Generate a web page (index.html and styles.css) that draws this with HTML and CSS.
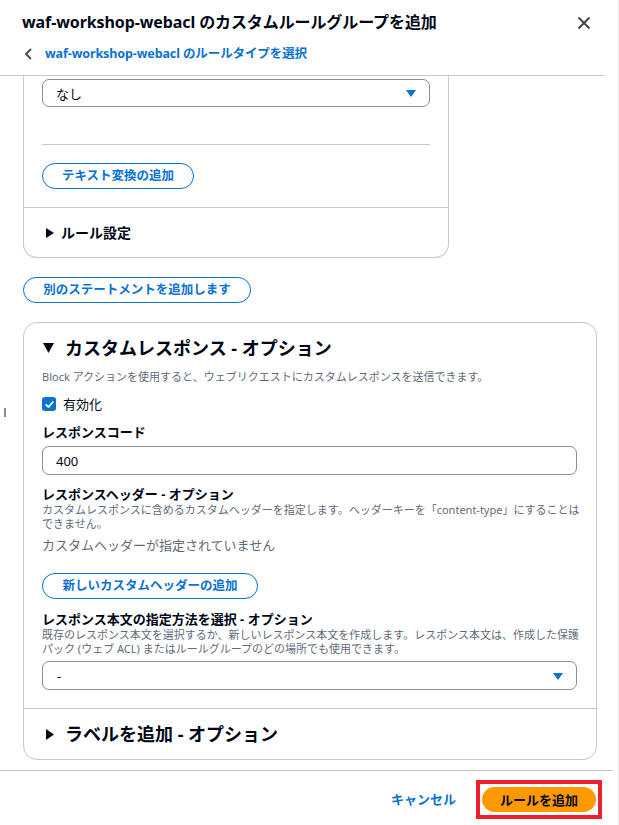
FILE: index.html
```html
<!DOCTYPE html>
<html lang="ja">
<head>
<meta charset="utf-8">
<link rel="stylesheet" href="styles.css">
</head>
<body>
<div class="panel">
  <header class="header">
    <div class="title-row">
      <h1 class="title">waf-workshop-webacl のカスタムルールグループを追加</h1>
      <svg class="close" width="14" height="14" viewBox="0 0 14 14"><path d="M1.5 1.5 L12.5 12.5 M12.5 1.5 L1.5 12.5" stroke="#424650" stroke-width="2" fill="none"/></svg>
    </div>
    <div class="back-row">
      <svg class="chev" width="9" height="12" viewBox="0 0 9 12"><path d="M7 1 L2 6 L7 11" stroke="#424650" stroke-width="1.8" fill="none"/></svg>
      <span class="back-link">waf-workshop-webacl のルールタイプを選択</span>
    </div>
  </header>

  <main class="content">
    <section class="card card-cut">
      <div class="card-body">
        <div class="select small">
          <span>なし</span>
          <svg class="caret" width="10" height="7" viewBox="0 0 10 7"><path d="M0 0 H10 L5 7 Z" fill="#0972d3"/></svg>
        </div>
        <hr class="divider">
        <button class="btn-outline">テキスト変換の追加</button>
      </div>
      <div class="card-section">
        <svg class="tri" width="8" height="10" viewBox="0 0 8 10"><path d="M0 0 L8 5 L0 10 Z" fill="#000716"/></svg>
        <span class="section-title sm">ルール設定</span>
      </div>
    </section>

    <button class="btn-outline standalone">別のステートメントを追加します</button>

    <section class="card card-main">
      <div class="card-body main-body">
        <div class="card-head">
          <svg class="tri-down" width="11" height="10" viewBox="0 0 11 10"><path d="M0 0 H11 L5.5 10 Z" fill="#000716"/></svg>
          <span class="section-title lg">カスタムレスポンス - オプション</span>
        </div>
        <p class="desc one">Block アクションを使用すると、ウェブリクエストにカスタムレスポンスを送信できます。</p>
        <label class="check-row">
          <span class="checkbox"><svg width="13" height="13" viewBox="0 0 13 13"><path d="M3.2 6.8 L5.5 9 L9.8 4.2" stroke="#fff" stroke-width="1.8" fill="none" stroke-linecap="round" stroke-linejoin="round"/></svg></span>
          <span class="check-label">有効化</span>
        </label>
        <div class="field-label f-code">レスポンスコード</div>
        <div class="input">400</div>
        <div class="field-label f-head">レスポンスヘッダー - オプション</div>
        <p class="desc two">カスタムレスポンスに含めるカスタムヘッダーを指定します。ヘッダーキーを「content-type」にすることはできません。</p>
        <div class="empty">カスタムヘッダーが指定されていません</div>
        <button class="btn-outline b-header">新しいカスタムヘッダーの追加</button>
        <div class="field-label f-body">レスポンス本文の指定方法を選択 - オプション</div>
        <p class="desc two">既存のレスポンス本文を選択するか、新しいレスポンス本文を作成します。レスポンス本文は、作成した保護パック (ウェブ ACL) またはルールグループのどの場所でも使用できます。</p>
        <div class="select wide">
          <span>-</span>
          <svg class="caret" width="10" height="7" viewBox="0 0 10 7"><path d="M0 0 H10 L5 7 Z" fill="#0972d3"/></svg>
        </div>
      </div>
      <div class="card-section lg-section">
        <svg class="tri lg-tri" width="8" height="11" viewBox="0 0 8 11"><path d="M0 0 L8 5.5 L0 11 Z" fill="#000716"/></svg>
        <span class="section-title lg">ラベルを追加 - オプション</span>
      </div>
    </section>
  </main>

  <footer class="footer">
    <span class="cancel">キャンセル</span>
    <span class="highlight"><button class="btn-primary">ルールを追加</button></span>
  </footer>
</div>
<span class="resize-grip"></span>
</body>
</html>
```
FILE: styles.css
```css
* { box-sizing: border-box; }
html, body { margin: 0; padding: 0; }
body {
  width: 619px;
  height: 825px;
  overflow: hidden;
  background: #fff;
  color: #000716;
  font-family: "Noto Sans", "Noto Sans CJK JP", sans-serif;
  position: relative;
}
.panel {
  width: 619px;
  height: 825px;
  display: flex;
  flex-direction: column;
  border-right: 1px solid #ececef;
}
.header {
  width: 604px;
  height: 76px;
  border-bottom: 1px solid #c6c6cd;
  padding: 11px 13px 0 22px;
}
.title-row {
  display: flex;
  justify-content: space-between;
  align-items: center;
  height: 22px;
}
.title {
  margin: 0;
  font-size: 16px;
  font-weight: 700;
  line-height: 22px;
  letter-spacing: -0.1px;
}
.close { margin-top: 1px; }
.back-row {
  display: flex;
  align-items: center;
  margin-top: 10px;
  padding-left: 2px;
  height: 22px;
}
.chev { margin-right: 12px; }
.back-link {
  color: #0972d3;
  font-size: 12.5px;
  font-weight: 700;
  line-height: 18px;
  letter-spacing: -0.1px;
}
.content {
  flex: 1;
  padding: 0 0 0 23px;
  overflow: hidden;
  display: flex;
  flex-direction: column;
  align-items: flex-start;
}
.card {
  border: 1px solid #c6c6cd;
  border-radius: 14px;
  background: #fff;
}
.card-cut {
  width: 426px;
  border-top: none;
  border-radius: 0 0 14px 14px;
}
.card-body {
  padding: 3px 18px 18px 18px;
}
.select {
  height: 28px;
  border: 1px solid #8c8c94;
  border-radius: 7px;
  display: flex;
  align-items: center;
  justify-content: space-between;
  padding: 0 13px 0 13px;
  font-size: 13px;
}
.select.small { width: 388px; height: 28px; }
.select.wide { width: 535px; height: 29px; margin-top: 5px; padding-left: 14px; }
.caret { margin-top: 1px; }
.divider {
  border: none;
  border-top: 1px solid #c6c6cd;
  margin: 37px 0 18px 0;
  width: 388px;
}
.btn-outline {
  font-family: inherit;
  background: #fff;
  border: 1.5px solid #0972d3;
  color: #0972d3;
  border-radius: 20px;
  height: 26px;
  padding: 0 18px;
  font-size: 12.5px;
  font-weight: 700;
  line-height: 18px;
  display: inline-flex;
  align-items: center;
}
.card-cut .btn-outline { width: 152px; justify-content: center; padding: 0; }
.card-section {
  border-top: 1px solid #c6c6cd;
  display: flex;
  align-items: center;
  height: 50px;
  padding-left: 22px;
}
.tri { margin-right: 7px; }
.section-title { font-weight: 700; }
.section-title.sm { font-size: 14px; line-height: 20px; }
.section-title.lg { font-size: 18px; line-height: 24px; }
.standalone {
  margin-top: 19px;
  width: 228px;
  justify-content: center;
  padding: 0;
}
.card-main {
  width: 574px;
  margin-top: 19px;
}
.main-body {
  padding: 13px 19px 18px 18px;
}
.card-head {
  display: flex;
  align-items: center;
  height: 24px;
}
.tri-down { margin-left: 1px; margin-right: 11px; }
.desc {
  margin: 0;
  color: #5f6b7a;
  font-size: 11px;
}
.desc.one { margin-top: 9px; line-height: 16px; }
.desc.two { line-height: 14px; width: 545px; }
.check-row {
  display: flex;
  align-items: center;
  height: 20px;
  margin-top: 9px;
}
.checkbox {
  width: 14px;
  height: 14px;
  border-radius: 3px;
  background: #0972d3;
  display: flex;
  align-items: center;
  justify-content: center;
}
.check-label { font-size: 13px; margin-left: 7px; line-height: 18px; }
.field-label {
  font-size: 13px;
  font-weight: 700;
  line-height: 18px;
}
.f-code { margin-top: 9px; }
.f-head { margin-top: 10px; }
.f-body { margin-top: 11px; }
.input {
  margin-top: 5px;
  width: 535px;
  height: 29px;
  border: 1px solid #8c8c94;
  border-radius: 7px;
  font-size: 13px;
  display: flex;
  align-items: center;
  padding-left: 13px;
}
.empty {
  color: #5f6b7a;
  font-size: 13px;
  line-height: 18px;
  margin-top: 5px;
}
.b-header { margin-top: 19px; width: 216px; justify-content: center; padding: 0; }
.lg-section { padding-left: 22px; height: 51px; }
.lg-tri { margin-right: 11px; }
.footer {
  height: 55px;
  border-top: 1px solid #c6c6cd;
  width: 613px;
  display: flex;
  align-items: center;
  justify-content: flex-end;
  padding-right: 11px;
}
.cancel {
  color: #0972d3;
  font-size: 13px;
  font-weight: 700;
  margin-right: 20px;
}
.highlight {
  border: 4px solid #e8222e;
  padding: 3px 2px;
  display: inline-flex;
  margin-top: 2px;
}
.btn-primary {
  font-family: inherit;
  background: #ff9900;
  border: none;
  border-radius: 20px;
  height: 25px;
  width: 114px;
  font-size: 13px;
  font-weight: 700;
  color: #000716;
  padding: 0;
}
.resize-grip {
  position: absolute;
  left: 4px;
  top: 408px;
  width: 2px;
  height: 9px;
  background: #8c8c94;
}
```
